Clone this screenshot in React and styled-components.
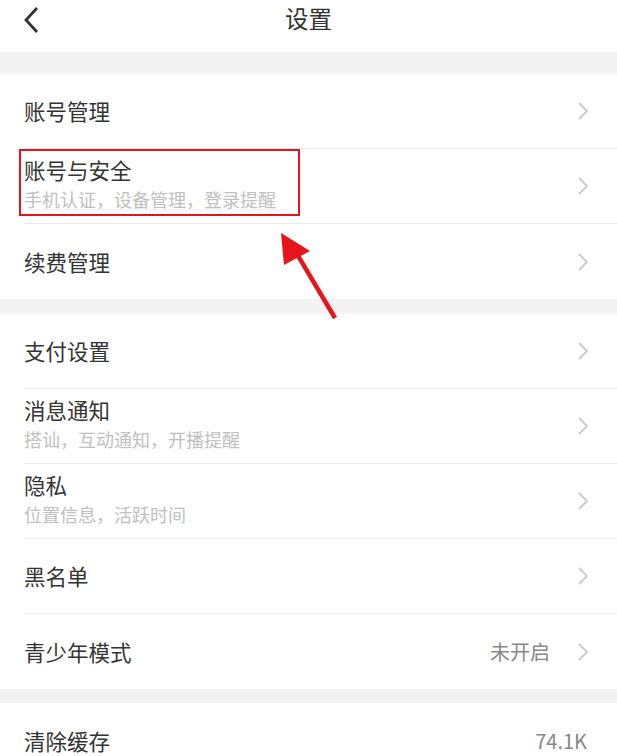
import React from "react";
import styled, { createGlobalStyle } from "styled-components";

const GlobalStyle = createGlobalStyle`
  body {
    margin: 0;
    background: #fff;
    font-family: "Noto Sans CJK SC", "Noto Sans", sans-serif;
    color: #333;
  }
`;

const Page = styled.div`
  width: 617px;
  height: 756px;
  overflow: hidden;
  background: #fff;
`;

const Header = styled.div`
  height: 52px;
  display: flex;
  align-items: center;
  justify-content: center;
  position: relative;
`;

const Title = styled.h1`
  margin: 0 0 16px;
  font-size: 23.5px;
  font-weight: 400;
  color: #333;
  line-height: 30px;
`;

const BackButton = styled.button`
  position: absolute;
  left: 19px;
  top: 5px;
  border: none;
  background: none;
  padding: 0;
  width: 24px;
  height: 30px;
  display: flex;
  align-items: center;
  justify-content: center;
`;

const Band = styled.div`
  height: ${(p) => p.$h}px;
  background: #f3f3f3;
`;

const Group = styled.div`
  background: #fff;
`;

const Row = styled.div`
  padding-left: 24px;
  position: relative;
`;

const RowInner = styled.div`
  height: 75px;
  display: flex;
  align-items: center;
  padding-right: 28px;
  border-bottom: ${(p) => (p.$last ? "none" : "1px solid #ebebeb")};
  box-sizing: border-box;
`;

const TextBlock = styled.div`
  flex: 1;
  display: flex;
  flex-direction: column;
  padding-bottom: ${(p) => (p.$sub ? 6 : 0)}px;
`;

const Label = styled.div`
  font-size: 21.5px;
  line-height: 26px;
  color: #333;
`;

const Sub = styled.div`
  margin-top: 5px;
  font-size: 18px;
  line-height: 22px;
  color: #c0c0c0;
`;

const Value = styled.span`
  font-size: 20px;
  color: #888;
  margin-right: ${(p) => (p.$chev ? 27 : 2)}px;
`;

const Highlight = styled.div`
  position: absolute;
  left: 19px;
  top: 0;
  width: 281px;
  height: 67px;
  border: 2.5px solid #e8141c;
  box-sizing: border-box;
  pointer-events: none;
`;

const Pointer = styled.svg`
  position: absolute;
  left: 270px;
  top: 225px;
  pointer-events: none;
`;

const Chevron = () => (
  <svg width="12" height="20" viewBox="0 0 12 20">
    <path d="M2 2l8 8-8 8" fill="none" stroke="#c9c9c9" strokeWidth="1.8" />
  </svg>
);

const groups = [
  [
    { label: "账号管理" },
    { label: "账号与安全", sub: "手机认证，设备管理，登录提醒", mark: true },
    { label: "续费管理" },
  ],
  [
    { label: "支付设置" },
    { label: "消息通知", sub: "搭讪，互动通知，开播提醒" },
    { label: "隐私", sub: "位置信息，活跃时间" },
    { label: "黑名单" },
    { label: "青少年模式", value: "未开启" },
  ],
  [{ label: "清除缓存", value: "74.1K", noChevron: true }],
];

function SettingRow({ item, last }) {
  const chev = !item.noChevron;
  return (
    <Row>
      {item.mark && <Highlight />}
      <RowInner $last={last}>
        <TextBlock $sub={!!item.sub}>
          <Label>{item.label}</Label>
          {item.sub && <Sub>{item.sub}</Sub>}
        </TextBlock>
        {item.value && <Value $chev={chev}>{item.value}</Value>}
        {chev && <Chevron />}
      </RowInner>
    </Row>
  );
}

export default function App() {
  return (
    <Page>
      <GlobalStyle />
      <Header>
        <BackButton>
          <svg width="16" height="28" viewBox="0 0 16 28">
            <path d="M14 2L3 14l11 12" fill="none" stroke="#333" strokeWidth="2.8" />
          </svg>
        </BackButton>
        <Title>设置</Title>
      </Header>
      <Band $h={22} />
      {groups.map((g, gi) => (
        <React.Fragment key={gi}>
          {gi > 0 && <Band $h={gi === 1 ? 15 : 14} />}
          <Group>
            {g.map((item, i) => (
              <SettingRow key={item.label} item={item} last={i === g.length - 1} />
            ))}
          </Group>
        </React.Fragment>
      ))}
      <Pointer width="80" height="100" viewBox="0 0 80 100">
        <path d="M65 93L24 24" stroke="#e8141c" strokeWidth="4.5" fill="none" />
        <polygon points="11,8 14,40 40,26" fill="#e8141c" />
      </Pointer>
    </Page>
  );
}
